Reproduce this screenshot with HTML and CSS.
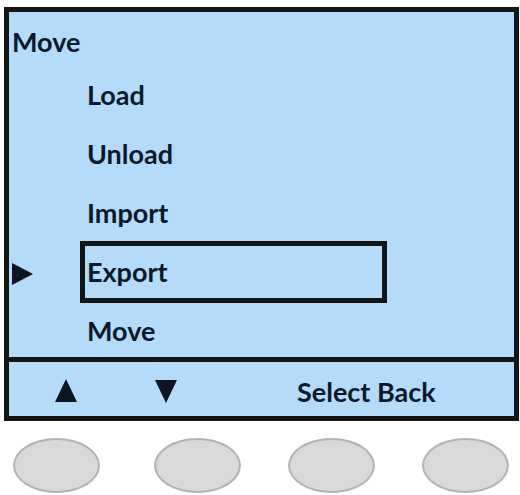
FILE: index.html
```html
<!DOCTYPE html>
<html lang="en">
<head>
<meta charset="utf-8">
<title>Move menu</title>
<link rel="stylesheet" href="styles.css">
</head>
<body>
<div class="device">
  <div class="screen">
    <div class="main">
      <div class="title">Move</div>
      <ul class="menu">
        <li class="item"><span class="pointer"></span><span class="label">Load</span></li>
        <li class="item"><span class="pointer"></span><span class="label">Unload</span></li>
        <li class="item"><span class="pointer"></span><span class="label">Import</span></li>
        <li class="item is-selected"><span class="pointer"></span><span class="label">Export</span></li>
        <li class="item"><span class="pointer"></span><span class="label">Move</span></li>
      </ul>
    </div>
    <div class="softbar">
      <span class="tri tri-up"></span>
      <span class="tri tri-down"></span>
      <span class="softtext">Select Back</span>
    </div>
  </div>
  <div class="keys">
    <span class="key"></span>
    <span class="key key-second"></span>
    <span class="key"></span>
    <span class="key"></span>
  </div>
</div>
</body>
</html>
```
FILE: styles.css
```css
* { box-sizing: border-box; }
html, body { margin: 0; padding: 0; background: #ffffff; }
body {
  width: 520px;
  height: 495px;
  overflow: hidden;
  font-family: "Lato", "Open Sans", "Liberation Sans", sans-serif;
  font-weight: 700;
  font-size: 27px;
  color: #0c192a;
}
.device { padding: 7px 0 0 4px; }
.screen {
  width: 515px;
  border: 5px solid #121416;
  background: #b4dcfa;
}
.main {
  height: 350px;
  overflow: hidden;
  border-bottom: 5px solid #121416;
}
.title {
  padding: 12px 0 0 3px;
  line-height: 35px;
  height: 53.5px;
}
.menu {
  list-style: none;
  margin: 0;
  padding: 0;
}
.item {
  height: 59px;
  display: flex;
  align-items: center;
}
.pointer {
  width: 71px;
  flex: none;
  display: flex;
  align-items: center;
  padding-left: 3px;
}
.label {
  width: 307px;
  height: 62px;
  flex: none;
  border: 5px solid transparent;
  padding-left: 2px;
  line-height: 52px;
}
.is-selected .label { border-color: #121416; }
.is-selected .pointer::before {
  content: "";
  width: 0;
  height: 0;
  border-top: 11px solid transparent;
  border-bottom: 11px solid transparent;
  border-left: 21px solid #0e1520;
  margin-top: 3px;
}
.softbar {
  height: 54px;
  display: flex;
  align-items: flex-start;
  padding-left: 46px;
}
.tri {
  width: 0;
  height: 0;
  flex: none;
  border-left: 11px solid transparent;
  border-right: 11px solid transparent;
}
.tri-up {
  margin-top: 17px;
  border-bottom: 23px solid #0e1520;
}
.tri-down {
  margin-top: 18px;
  margin-left: 78px;
  border-top: 23px solid #0e1520;
}
.softtext {
  margin-left: 120px;
  padding-top: 12px;
  line-height: 35px;
}
.keys {
  display: flex;
  gap: 47px;
  padding: 17px 0 0 9px;
}
.key {
  width: 87px;
  height: 55px;
  flex: none;
  border-radius: 50%;
  background: #d9d9d9;
  border: 2px solid #b3b3b3;
}
.key-second { margin-left: 7px; }
```
